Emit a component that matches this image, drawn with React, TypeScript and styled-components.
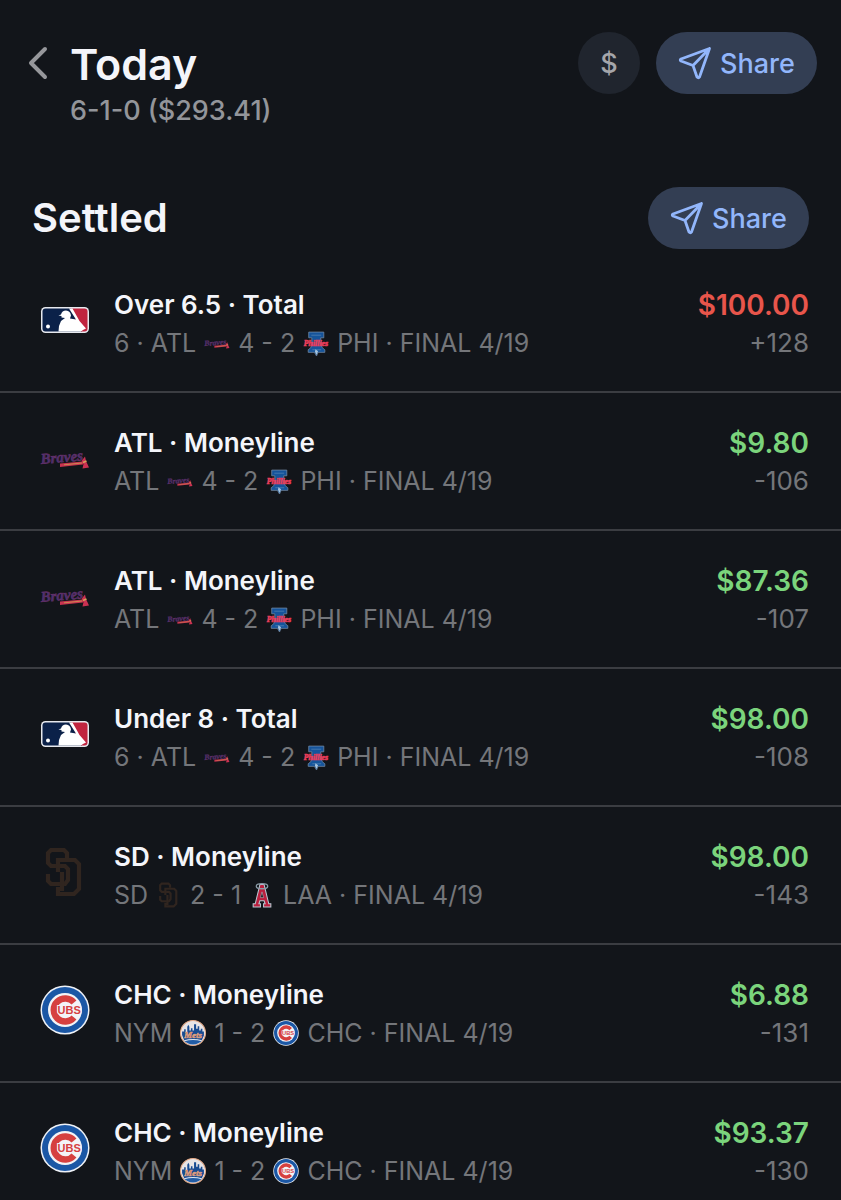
import React from 'react';
import styled, { createGlobalStyle } from 'styled-components';

const GlobalStyle = createGlobalStyle`
  * { box-sizing: border-box; }
  body {
    margin: 0;
    background: #12151a;
    color: #f4f5fa;
    font-family: Inter, "Liberation Sans", sans-serif;
    -webkit-font-smoothing: antialiased;
  }
  button { font-family: inherit; border: 0; cursor: pointer; }
`;

const Page = styled.main`
  width: 100%;
  overflow: hidden;
`;

const Header = styled.header`
  display: flex;
  align-items: flex-start;
  padding: 32px 24px 0 28px;
`;

const BackButton = styled.button`
  display: flex;
  align-items: center;
  width: 42px;
  height: 62px;
  padding: 0;
  background: none;
`;

const Heading = styled.div`
  flex: 1;
`;

const Title = styled.h1`
  margin: 0;
  font-size: 43px;
  line-height: 64px;
  font-weight: 600;
`;

const Record = styled.p`
  margin: 0;
  font-size: 27px;
  line-height: 30px;
  font-weight: 500;
  color: #93959a;
`;

const Actions = styled.div`
  display: flex;
  gap: 16px;
`;

const RoundButton = styled.button`
  width: 62px;
  height: 62px;
  padding: 0;
  border-radius: 50%;
  background: #20252e;
  color: #a5a6aa;
  font-size: 27px;
  font-weight: 500;
`;

const Pill = styled.button`
  display: flex;
  align-items: center;
  justify-content: center;
  gap: 8px;
  width: 161px;
  height: 62px;
  padding: 0;
  border-radius: 32px;
  background: #333e53;
  color: #92b6fb;
  font-size: 27px;
  font-weight: 500;
`;

const SectionHead = styled.div`
  display: flex;
  align-items: center;
  justify-content: space-between;
  padding: 61px 32px 0;
`;

const SectionTitle = styled.h2`
  margin: 0;
  font-size: 40px;
  line-height: 62px;
  font-weight: 600;
`;

const List = styled.ul`
  list-style: none;
  margin: 6px 0 0;
  padding: 0;
`;

const Row = styled.li`
  display: flex;
  align-items: flex-start;
  padding: 31px 32px 29px 40px;
  border-bottom: 2px solid #3b3d42;

  &:last-child {
    padding-bottom: 0;
    border-bottom: 0;
  }
`;

const Badge = styled.div`
  display: flex;
  align-items: center;
  width: 74px;
  height: 68px;
`;

const Details = styled.div`
  flex: 1;
  min-width: 0;
`;

const Bet = styled.h3`
  margin: 0;
  font-size: 26px;
  line-height: 38px;
  font-weight: 600;
`;

const Score = styled.p`
  display: flex;
  align-items: center;
  gap: 8px;
  margin: 0;
  font-size: 25px;
  line-height: 38px;
  color: #74767a;
  white-space: nowrap;
`;

const Result = styled.div`
  text-align: right;
`;

const Amount = styled.p<{ $lost?: boolean }>`
  margin: 0;
  font-size: 28px;
  line-height: 38px;
  font-weight: 600;
  color: ${(p) => (p.$lost ? '#e8554b' : '#7bd47c')};
`;

const Odds = styled.p`
  margin: 0;
  font-size: 26px;
  line-height: 38px;
  color: #74767a;
`;

type LogoProps = { size: number };

const Mlb = ({ size }: LogoProps) => (
  <svg width={size} height={size} viewBox="0 0 50 50" aria-hidden="true">
    <rect x="1" y="12" width="48" height="26" rx="4.5" fill="#e6e8ee" />
    <path d="M5.500 13.500H31L42 31V36.500H5.500Q2.500 36.500 2.500 33.500V16.500Q2.500 13.500 5.500 13.500Z" fill="#0b2149" />
    <path d="M31 13.500H44.500Q47.500 13.500 47.500 16.500V33.500Q47.500 36.500 44.500 36.500H41Z" fill="#c0243f" />
    <path d="M29 13.500H32.500L39.500 26L46 33.500L43 35L41 36.500H18.500L19 31L21 26L25 23L21.500 22.500V21L18.500 20.500L21 19.500Q22 15.500 26 15.500Q30.500 16 31 20.500L30 23.500L36 24.500Z" fill="#fff" />
    <circle cx="8" cy="31.500" r="2" fill="#fff" />
  </svg>
);

const Braves = ({ size }: LogoProps) => (
  <svg width={size} height={size} viewBox="0 0 50 50" overflow="visible" aria-hidden="true">
    <text
      x="1"
      y="31"
      transform="rotate(-5 1 31)"
      fontFamily="Liberation Serif, serif"
      fontSize="15"
      fontStyle="italic"
      fontWeight="700"
      fill="#46306e"
      stroke="#6d3069"
      strokeWidth="0.5"
    >
      Braves
    </text>
    <path d="M20 30.500L43 28.500V31.500L20 34Z" fill="#c93350" />
    <path d="M24 31.800L42 30" stroke="#c9904f" strokeWidth="0.900" />
    <path d="M41.500 28L45 23.500L46 28L49 34.500L42.500 35.500L43.500 31Z" fill="#cb3152" />
    <path d="M43 29.500L46.500 28" stroke="#d8a05c" strokeWidth="1.500" />
  </svg>
);

const Phillies = ({ size }: LogoProps) => (
  <svg width={size} height={size} viewBox="0 0 50 50" overflow="visible" aria-hidden="true">
    <path
      d="M11 4H40V15H34L35 25L37 34L42 38V43H29L26 50L22 43H10V38L15 34L17 25V15H11Z"
      fill="#15549b"
      stroke="#7389a3"
      strokeWidth="1.500"
    />
    <path d="M16 10H35M18 38H35" stroke="#5482b2" strokeWidth="1.500" />
    <path d="M24 37L29 41L26 48L23 42Z" fill="#a7c5df" />
    <text
      x="25"
      y="31"
      fontFamily="Liberation Serif, serif"
      fontSize="15"
      fontStyle="italic"
      fontWeight="700"
      fill="#f1546d"
      stroke="#e63857"
      strokeWidth="1.200"
      textAnchor="middle"
    >
      Phillies
    </text>
  </svg>
);

const Padres = ({ size }: LogoProps) => (
  <svg width={size} height={size} viewBox="0 0 50 50" aria-hidden="true">
    <g fill="none" stroke="#30251f" strokeWidth="4.200">
      <path d="M27 11V6L24 3H11L8 6V16L11 19H25L28 22V33L25 37H11L8 34V27" />
      <path d="M18 25V13H35L39 17V42L34 47H18V42H22V25" />
    </g>
  </svg>
);

const Angels = ({ size }: LogoProps) => (
  <svg width={size} height={size} viewBox="0 0 50 50" aria-hidden="true">
    <path d="M21 5H29L38 42H42V48H28V42H31L29 36H21L19 42H22V48H8V42H12Z" fill="#ba1f3e" stroke="#b9c9d3" strokeWidth="2" />
    <path d="M25 19L28 30H22Z" fill="#12151a" stroke="#b9c9d3" />
    <ellipse cx="25" cy="8" rx="11" ry="5" fill="none" stroke="#8a9ca8" strokeWidth="2.500" />
  </svg>
);

const Cubs = ({ size }: LogoProps) => (
  <svg width={size} height={size} viewBox="0 0 50 50" aria-hidden="true">
    <circle cx="25" cy="25" r="24.500" fill="#eef1f6" />
    <circle cx="25" cy="25" r="23" fill="#1b57a5" />
    <circle cx="25" cy="25" r="17" fill="#f3f4f7" />
    <path d="M34 17.500A11.500 11.500 0 1 0 34 32.500" fill="none" stroke="#d6403f" strokeWidth="6.500" />
    <text
      x="17.500"
      y="29"
      fontFamily="Liberation Sans, sans-serif"
      fontSize="11"
      fontWeight="700"
      fill="#d6403f"
      stroke="#f3f4f7"
      strokeWidth="2"
      paintOrder="stroke"
    >
      UBS
    </text>
  </svg>
);

const Mets = ({ size }: LogoProps) => (
  <svg width={size} height={size} viewBox="0 0 50 50" aria-hidden="true">
    <circle cx="25" cy="25" r="24" fill="#e7e4e6" stroke="#e5aa88" strokeWidth="2" />
    <path d="M4 29V22H8V18H11V23H14V13L16 9L18 13V20H21V16H24V20H27V8H31V17H34V12H37V20H40V17H43V22H46V30L42 39H8Z" fill="#184b92" />
    <path d="M7 39Q25 33 43 39Q36 47 25 47Q14 47 7 39Z" fill="#225ca5" />
    <path d="M8 40Q25 35 42 40" stroke="#dfe6ef" strokeWidth="2" fill="none" />
    <text
      x="25"
      y="35"
      fontFamily="Liberation Serif, serif"
      fontSize="17"
      fontStyle="italic"
      fontWeight="700"
      textAnchor="middle"
      fill="#ed8145"
      stroke="#d7a18a"
      strokeWidth="1"
    >
      Mets
    </text>
  </svg>
);

const SendIcon = () => (
  <svg width="34" height="34" viewBox="0 0 34 34" fill="none" stroke="currentColor" strokeWidth="2.800" strokeLinejoin="round" strokeLinecap="round" aria-hidden="true">
    <path d="M31.500 2.500L3 13Q1.500 14 3 15L15 19.500L19 31Q20.500 32.500 21.500 31L31.500 2.500L15 19.500" />
  </svg>
);

const ShareButton = () => (
  <Pill type="button">
    <SendIcon />
    Share
  </Pill>
);

type Logo = React.ComponentType<LogoProps>;

type BetRow = {
  logo: Logo;
  bet: string;
  away: string;
  awayLogo: Logo;
  score: string;
  homeLogo: Logo;
  home: string;
  amount: string;
  odds: string;
  lost?: boolean;
};

const atlPhi = { awayLogo: Braves, score: '4 - 2', homeLogo: Phillies, home: 'PHI' };
const nymChc = { away: 'NYM', awayLogo: Mets, score: '1 - 2', homeLogo: Cubs, home: 'CHC' };

const bets: BetRow[] = [
  { ...atlPhi, logo: Mlb, bet: 'Over 6.5 · Total', away: '6 · ATL', amount: '$100.00', odds: '+128', lost: true },
  { ...atlPhi, logo: Braves, bet: 'ATL · Moneyline', away: 'ATL', amount: '$9.80', odds: '-106' },
  { ...atlPhi, logo: Braves, bet: 'ATL · Moneyline', away: 'ATL', amount: '$87.36', odds: '-107' },
  { ...atlPhi, logo: Mlb, bet: 'Under 8 · Total', away: '6 · ATL', amount: '$98.00', odds: '-108' },
  {
    logo: Padres,
    bet: 'SD · Moneyline',
    away: 'SD',
    awayLogo: Padres,
    score: '2 - 1',
    homeLogo: Angels,
    home: 'LAA',
    amount: '$98.00',
    odds: '-143',
  },
  { ...nymChc, logo: Cubs, bet: 'CHC · Moneyline', amount: '$6.88', odds: '-131' },
  { ...nymChc, logo: Cubs, bet: 'CHC · Moneyline', amount: '$93.37', odds: '-130' },
];

export default function App() {
  return (
    <Page>
      <GlobalStyle />
      <Header>
        <BackButton type="button" aria-label="Back">
          <svg width="20" height="34" viewBox="0 0 20 34" fill="none" stroke="#96979b" strokeWidth="4" strokeLinecap="round" strokeLinejoin="round" aria-hidden="true">
            <path d="M17 3L3 17L17 31" />
          </svg>
        </BackButton>
        <Heading>
          <Title>Today</Title>
          <Record>6-1-0 ($293.41)</Record>
        </Heading>
        <Actions>
          <RoundButton type="button">$</RoundButton>
          <ShareButton />
        </Actions>
      </Header>
      <SectionHead>
        <SectionTitle>Settled</SectionTitle>
        <ShareButton />
      </SectionHead>
      <List>
        {bets.map((b, i) => (
          <Row key={i}>
            <Badge>
              <b.logo size={50} />
            </Badge>
            <Details>
              <Bet>{b.bet}</Bet>
              <Score>
                <span>{b.away}</span>
                <b.awayLogo size={26} />
                <span>{b.score}</span>
                <b.homeLogo size={26} />
                <span>{b.home} · FINAL 4/19</span>
              </Score>
            </Details>
            <Result>
              <Amount $lost={b.lost}>{b.amount}</Amount>
              <Odds>{b.odds}</Odds>
            </Result>
          </Row>
        ))}
      </List>
    </Page>
  );
}
